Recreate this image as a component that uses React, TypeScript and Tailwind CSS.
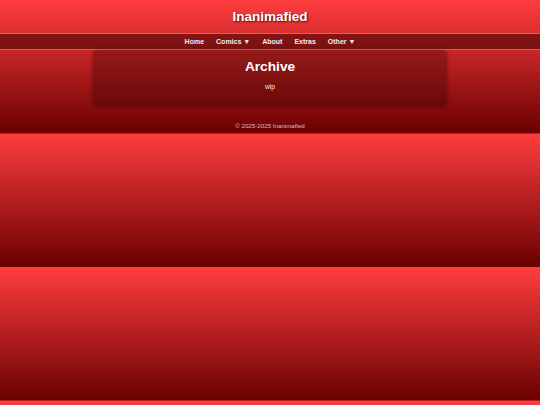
import React from "react";

export default function App() {
  const links = ["Home", "Comics ▼", "About", "Extras", "Other ▼"];
  return (
    <div
      className="w-full h-screen overflow-hidden bg-[linear-gradient(to_bottom,#ff3d3f,#6a0000)] bg-[length:100%_133.5px] bg-repeat-y text-white"
      style={{ fontFamily: '"Liberation Sans", Arial, sans-serif' }}
    >
      <header className="h-[33px] flex items-center justify-center">
        <h1 className="text-[13.5px] font-bold leading-none [text-shadow:1px_1px_2px_rgba(0,0,0,0.75)]">
          Inanimafied
        </h1>
      </header>
      <nav className="h-[17px] border-y border-[rgba(255,255,255,0.4)] bg-[rgba(60,0,0,0.55)] flex items-center justify-center gap-[12px]">
        {links.map((l) => (
          <span key={l} className="text-[7px] font-bold leading-none text-[#f4eaea]">
            {l}
          </span>
        ))}
      </nav>
      <main className="flex justify-center">
        <div className="w-[354px] h-[56px] rounded-[5px] bg-[rgba(40,0,0,0.3)] shadow-[0_1px_4px_rgba(0,0,0,0.35)] flex flex-col items-center pt-[10px]">
          <h2 className="text-[13.7px] font-bold leading-none">Archive</h2>
          <p className="text-[6.8px] leading-none mt-[10px] text-[#f0e4e4]">wip</p>
        </div>
      </main>
      <footer className="h-[27.5px] flex items-end justify-center pb-[4px]">
        <span className="text-[6.2px] leading-none text-[rgba(255,255,255,0.72)]">© 2025-2025 Inanimafied</span>
      </footer>
    </div>
  );
}
